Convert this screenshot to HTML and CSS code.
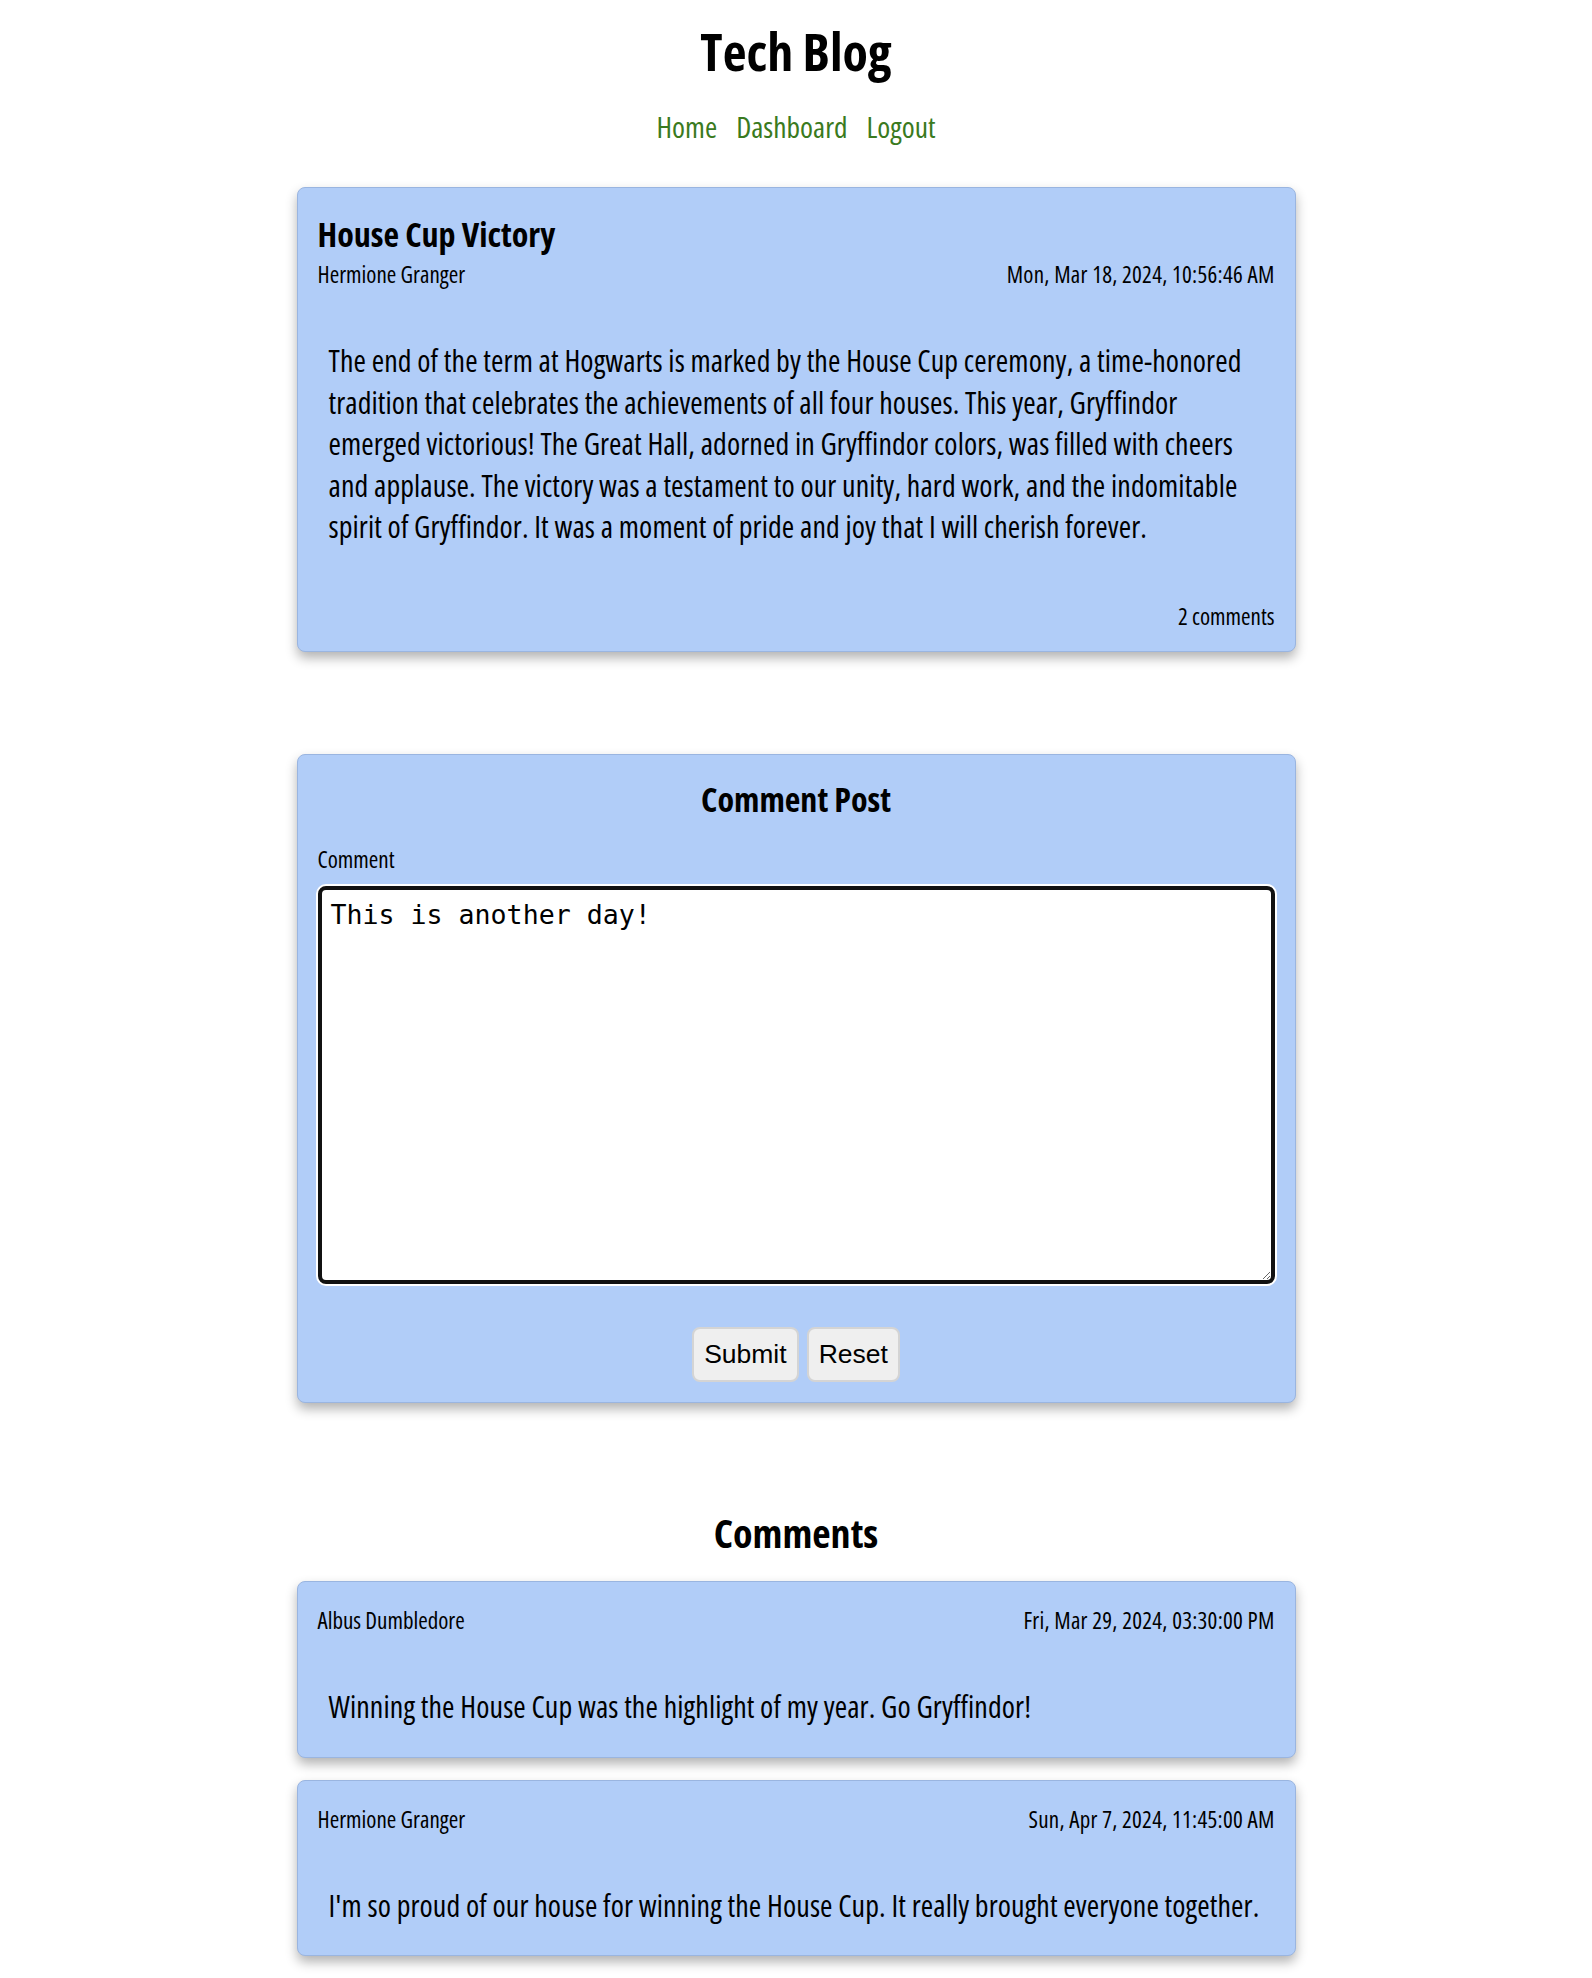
FILE: index.html
```html
<!DOCTYPE html>
<html lang="en">
	<head>
		<meta charset="utf-8">
		<title>Tech Blog</title>
		<meta name="viewport" content="width=device-width, initial-scale=1">
		<link rel="stylesheet" href="styles.css">
	</head>
	<body>
		<header class="site-header">
			<h1>Tech Blog</h1>
			<nav>
				<a href="/">Home</a>
				<a href="/dashboard">Dashboard</a>
				<a href="/logout">Logout</a>
			</nav>
		</header>
		<main class="content">
			<article class="card post">
				<h2 class="post-title">House Cup Victory</h2>
				<div class="meta">
					<span>Hermione Granger</span>
					<span>Mon, Mar 18, 2024, 10:56:46 AM</span>
				</div>
				<p class="post-body">The end of the term at Hogwarts is marked by the House Cup ceremony, a time-honored tradition that celebrates the achievements of all four houses. This year, Gryffindor emerged victorious! The Great Hall, adorned in Gryffindor colors, was filled with cheers and applause. The victory was a testament to our unity, hard work, and the indomitable spirit of Gryffindor. It was a moment of pride and joy that I will cherish forever.</p>
				<div class="post-footer">2 comments</div>
			</article>

			<form class="card comment-form">
				<h2>Comment Post</h2>
				<label for="comment">Comment</label>
				<textarea id="comment" name="comment">This is another day!</textarea>
				<div class="actions">
					<button type="submit">Submit</button>
					<button type="reset">Reset</button>
				</div>
			</form>

			<section class="comments">
				<h2>Comments</h2>
				<div class="card comment">
					<div class="meta">
						<span>Albus Dumbledore</span>
						<span>Fri, Mar 29, 2024, 03:30:00 PM</span>
					</div>
					<p>Winning the House Cup was the highlight of my year. Go Gryffindor!</p>
				</div>
				<div class="card comment">
					<div class="meta">
						<span>Hermione Granger</span>
						<span>Sun, Apr 7, 2024, 11:45:00 AM</span>
					</div>
					<p>I'm so proud of our house for winning the House Cup. It really brought everyone together.</p>
				</div>
			</section>
		</main>
	</body>
</html>
```
FILE: styles.css
```css
* {
	box-sizing: border-box;
}
body {
	margin: 0;
	color: #000;
	background: #fff;
	font-family: "Open Sans", sans-serif;
	font-stretch: 75%;
	font-weight: 500;
}
h1,
h2 {
	font-weight: 700;
}
.site-header {
	text-align: center;
	padding-top: 19px;
}
.site-header h1 {
	margin: 0;
	font-size: 52px;
	line-height: 64px;
}
.site-header nav {
	margin-top: 24px;
	display: flex;
	justify-content: center;
	gap: 19px;
	font-size: 29.5px;
	line-height: 40px;
}
.site-header nav a {
	color: #3a7a20;
	text-decoration: none;
}
.content {
	width: 999px;
	margin: 40px auto 0;
}
.card {
	background: #b1cdf8;
	border: 1px solid #9ab5e0;
	border-radius: 8px;
	box-shadow: 0 6px 12px rgba(0, 0, 0, 0.3);
	padding: 20px;
}
.meta {
	display: flex;
	justify-content: space-between;
	font-size: 23px;
	line-height: 30px;
}
.meta span:last-child {
	letter-spacing: 0.25px;
}

/* post */
.post-title {
	margin: 6px 0 5px;
	font-size: 34px;
	line-height: 40px;
}
.post-body,
.comment p {
	padding: 0 11px;
	font-size: 30px;
	line-height: 41.6px;
	letter-spacing: 0.1px;
}
.post-body {
	margin: 51px 0 0;
}
.post-footer {
	margin-top: 53px;
	text-align: right;
	font-size: 23px;
	line-height: 30px;
}

/* comment form */
.comment-form {
	display: block;
	margin-top: 102px;
}
.comment-form h2 {
	margin: 3px 0 0;
	text-align: center;
	font-size: 34px;
	line-height: 42px;
}
.comment-form label {
	display: block;
	margin-top: 24px;
	font-size: 23px;
	line-height: 30px;
}
.comment-form textarea {
	display: block;
	width: 100%;
	height: 398px;
	margin-top: 12px;
	padding: 9px 9px 7px;
	border: 4px solid #111;
	border-radius: 8px;
	box-shadow: 0 0 0 2px #fff;
	outline: none;
	background: #fff;
	color: #000;
	font-family: "DejaVu Sans Mono", monospace;
	font-size: 26.6px;
}
.actions {
	margin-top: 43px;
	display: flex;
	justify-content: center;
	gap: 8px;
}
.actions button {
	padding: 10px;
	border: 2px solid #d4d4d4;
	border-radius: 8px;
	background: #efefef;
	color: #000;
	font-family: "Liberation Sans", Arial, sans-serif;
	font-stretch: 100%;
	font-weight: 400;
	font-size: 26.5px;
	cursor: pointer;
}

/* comments list */
.comments {
	margin-top: 104px;
}
.comments h2 {
	margin: 0 0 22px;
	text-align: center;
	font-size: 40px;
	line-height: 52px;
}
.comment {
	margin-bottom: 22px;
}
.comment .meta {
	margin-top: 3px;
}
.comment p {
	margin: 51px 0 9px;
}
```
